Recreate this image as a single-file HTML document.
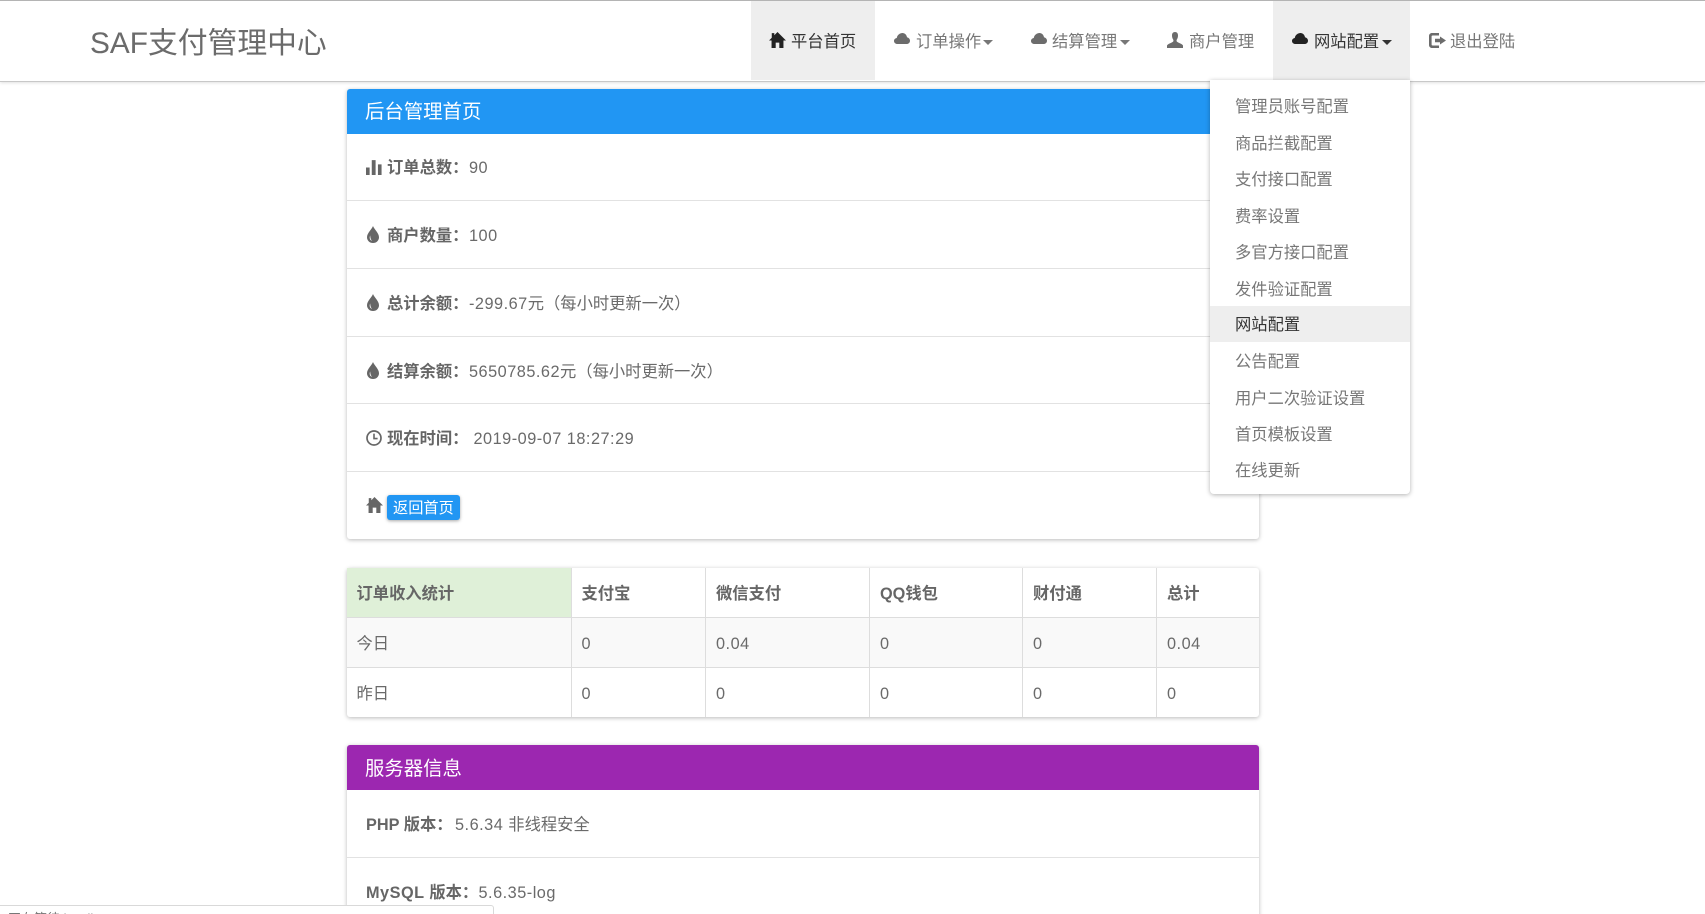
<!DOCTYPE html>
<html lang="zh-CN">
<head>
<meta charset="utf-8">
<title>SAF支付管理中心</title>
<style>
html,body{margin:0;padding:0;width:1705px;height:914px;overflow:hidden;background:#fff}
body{position:relative;font-family:"Liberation Sans","Noto Sans CJK SC",sans-serif;color:#6a6a6a}
.t{position:absolute;white-space:nowrap;line-height:20px;font-size:16.3px;margin-top:1px}
.b{font-weight:700;color:#666}
.box{position:absolute}
svg{position:absolute;display:block}
.nav{color:#777}
.on{color:#333}
.dd{color:#777}
.n{letter-spacing:.5px}
.caret{position:absolute;width:0;height:0;border-left:5px solid transparent;border-right:5px solid transparent;border-top:5.5px solid #777}
.line{position:absolute;left:347px;width:912px;height:1px;background:#e2e2e2}
.vl{position:absolute;top:568px;width:1px;height:149px;background:#ddd}
</style>
</head>
<body>
<!-- navbar -->
<div class="box" style="left:0;top:0;width:1705px;height:82px;background:#fff;border-top:1px solid #b4b4b4;border-bottom:1px solid #c8c8c8;box-sizing:border-box;box-shadow:0 1px 3px rgba(0,0,0,.12)"></div>
<div class="box" style="left:751px;top:1px;width:124px;height:79px;background:#eee"></div>
<div class="box" style="left:1273px;top:1px;width:137px;height:79px;background:#eee"></div>
<div class="t" style="left:90px;top:23px;font-size:29.8px;line-height:40px;color:#6b6b6b">SAF支付管理中心</div>

<svg style="left:769px;top:32px" width="17" height="16" viewBox="0 0 16 15"><path fill="#222" d="M8 0L16 8H13.6V15H9.7V10H6.3V15H2.4V8H0L2.6 5.4V1H5V3Z"/></svg>
<div class="t on" style="left:791px;top:31px">平台首页</div>

<svg style="left:894px;top:32px" width="16" height="12" viewBox="0 0 16 12"><path fill="#6c6c6c" d="M3.4 12C1.5 12 0 10.7 0 9C0 7.4 1.2 6.2 2.8 6C3 3.8 4.8 1.6 7.6 1.1C10.5.6 12.6 2.7 13 5.2C14.8 5.6 16 7 16 8.7C16 10.6 14.5 12 12.6 12Z"/></svg>
<div class="t nav" style="left:916px;top:31px">订单操作</div>
<div class="caret" style="left:983px;top:40px"></div>

<svg style="left:1031px;top:32px" width="16" height="12" viewBox="0 0 16 12"><path fill="#6c6c6c" d="M3.4 12C1.5 12 0 10.7 0 9C0 7.4 1.2 6.2 2.8 6C3 3.8 4.8 1.6 7.6 1.1C10.5.6 12.6 2.7 13 5.2C14.8 5.6 16 7 16 8.7C16 10.6 14.5 12 12.6 12Z"/></svg>
<div class="t nav" style="left:1052px;top:31px">结算管理</div>
<div class="caret" style="left:1120px;top:40px"></div>

<svg style="left:1167px;top:32px" width="16" height="16" viewBox="0 0 16 16"><path fill="#6c6c6c" d="M8 0C5.9 0 5 1.5 5 3.4C5 5 5.4 6.6 6.3 7.7C6.6 8.6 6.5 9.4 5.6 10C4.1 11 1 11.7 0 13.5V16H16V13.5C15 11.7 11.9 11 10.4 10C9.5 9.4 9.4 8.6 9.7 7.7C10.6 6.6 11 5 11 3.4C11 1.5 10.1 0 8 0Z"/></svg>
<div class="t nav" style="left:1189px;top:31px">商户管理</div>

<svg style="left:1292px;top:32px" width="16" height="12" viewBox="0 0 16 12"><path fill="#222" d="M3.4 12C1.5 12 0 10.7 0 9C0 7.4 1.2 6.2 2.8 6C3 3.8 4.8 1.6 7.6 1.1C10.5.6 12.6 2.7 13 5.2C14.8 5.6 16 7 16 8.7C16 10.6 14.5 12 12.6 12Z"/></svg>
<div class="t on" style="left:1314px;top:31px">网站配置</div>
<div class="caret" style="left:1382px;top:40px;border-top-color:#333"></div>

<svg style="left:1429px;top:33px" width="17" height="15" viewBox="0 0 17 15"><path fill="#6c6c6c" d="M3 0H10V2.5H3.6C3 2.5 2.6 2.9 2.6 3.5V11.5C2.6 12.1 3 12.5 3.6 12.5H10V15H3C1.3 15 0 13.7 0 12V3C0 1.3 1.3 0 3 0Z"/><path fill="#6c6c6c" d="M11 3.5L17 7.5L11 11.5V9.3H6V5.7H11Z"/></svg>
<div class="t nav" style="left:1450px;top:31px">退出登陆</div>

<!-- panel 1 -->
<div class="box" style="left:347px;top:89px;width:912px;height:450px;background:#fff;border-radius:3px;box-shadow:0 1px 4px rgba(0,0,0,.28)"></div>
<div class="box" style="left:347px;top:89px;width:912px;height:45px;background:#2196f3;border-radius:3px 3px 0 0"></div>
<div class="t" style="left:365px;top:101px;font-size:19.4px;color:#fff">后台管理首页</div>
<div class="line" style="top:200px"></div>
<div class="line" style="top:268px"></div>
<div class="line" style="top:336px"></div>
<div class="line" style="top:403px"></div>
<div class="line" style="top:471px"></div>

<svg style="left:366px;top:159px" width="16" height="16" viewBox="0 0 15 15"><path fill="#666" d="M0 8H3.4V15H0ZM5.4 1H9V15H5.4ZM11.2 5H14.6V15H11.2Z"/></svg>
<div class="t b" style="left:387px;top:157px">订单总数：</div>
<div class="t n" style="left:469px;top:157px">90</div>

<svg style="left:367px;top:226px" width="12" height="17" viewBox="0 0 12 17"><path fill="#666" fill-rule="evenodd" d="M6 0C6.9 3 12 7 12 11.2C12 14.5 9.4 17 6 17C2.6 17 0 14.5 0 11.2C0 7 5.1 3 6 0ZM3.2 9.5C2.2 11.5 2.6 14 5 15C3.8 13.5 3.2 11.5 3.2 9.5Z"/></svg>
<div class="t b" style="left:387px;top:225px">商户数量：</div>
<div class="t n" style="left:469px;top:225px">100</div>

<svg style="left:367px;top:294px" width="12" height="17" viewBox="0 0 12 17"><path fill="#666" fill-rule="evenodd" d="M6 0C6.9 3 12 7 12 11.2C12 14.5 9.4 17 6 17C2.6 17 0 14.5 0 11.2C0 7 5.1 3 6 0ZM3.2 9.5C2.2 11.5 2.6 14 5 15C3.8 13.5 3.2 11.5 3.2 9.5Z"/></svg>
<div class="t b" style="left:387px;top:293px">总计余额：</div>
<div class="t" style="left:469px;top:293px"><span class="n">-299.67</span>元（每小时更新一次）</div>

<svg style="left:367px;top:362px" width="12" height="17" viewBox="0 0 12 17"><path fill="#666" fill-rule="evenodd" d="M6 0C6.9 3 12 7 12 11.2C12 14.5 9.4 17 6 17C2.6 17 0 14.5 0 11.2C0 7 5.1 3 6 0ZM3.2 9.5C2.2 11.5 2.6 14 5 15C3.8 13.5 3.2 11.5 3.2 9.5Z"/></svg>
<div class="t b" style="left:387px;top:361px">结算余额：</div>
<div class="t" style="left:469px;top:361px"><span class="n">5650785.62</span>元（每小时更新一次）</div>

<svg style="left:366px;top:430px" width="16" height="16" viewBox="0 0 16 16"><circle cx="8" cy="8" r="7" fill="none" stroke="#666" stroke-width="1.7"/><path fill="none" stroke="#666" stroke-width="1.6" d="M8 3.6V8.6H11.6"/></svg>
<div class="t b" style="left:387px;top:428px">现在时间：</div>
<div class="t n" style="left:473.5px;top:428px">2019-09-07 18:27:29</div>

<svg style="left:366px;top:497px" width="17" height="16" viewBox="0 0 16 15"><path fill="#666" d="M8 0L16 8H13.6V15H9.7V10H6.3V15H2.4V8H0L2.6 5.4V1H5V3Z"/></svg>
<div class="box" style="left:387px;top:495px;width:73px;height:25px;background:#2196f3;border-radius:3px;box-shadow:0 1px 3px rgba(0,0,0,.35)"></div>
<div class="t" style="left:393px;top:498px;font-size:15.2px;color:#fff">返回首页</div>

<!-- table -->
<div class="box" style="left:347px;top:568px;width:912px;height:149px;background:#fff;border-radius:3px;box-shadow:0 1px 4px rgba(0,0,0,.28)"></div>
<div class="box" style="left:347px;top:568px;width:224px;height:50px;background:#dff0d8"></div>
<div class="box" style="left:347px;top:618px;width:912px;height:49px;background:#f9f9f9"></div>
<div class="line" style="top:617px;background:#ddd"></div>
<div class="line" style="top:667px;background:#ddd"></div>
<div class="vl" style="left:571px"></div>
<div class="vl" style="left:705px"></div>
<div class="vl" style="left:869px"></div>
<div class="vl" style="left:1022px"></div>
<div class="vl" style="left:1156px"></div>

<div class="t b" style="left:356.5px;top:583px">订单收入统计</div>
<div class="t b" style="left:581.5px;top:583px">支付宝</div>
<div class="t b" style="left:716px;top:583px">微信支付</div>
<div class="t b" style="left:880px;top:583px">QQ钱包</div>
<div class="t b" style="left:1033px;top:583px">财付通</div>
<div class="t b" style="left:1167px;top:583px">总计</div>

<div class="t" style="left:356.5px;top:633px">今日</div>
<div class="t n" style="left:581.5px;top:633px">0</div>
<div class="t n" style="left:716px;top:633px">0.04</div>
<div class="t n" style="left:880px;top:633px">0</div>
<div class="t n" style="left:1033px;top:633px">0</div>
<div class="t n" style="left:1167px;top:633px">0.04</div>

<div class="t" style="left:356.5px;top:683px">昨日</div>
<div class="t n" style="left:581.5px;top:683px">0</div>
<div class="t n" style="left:716px;top:683px">0</div>
<div class="t n" style="left:880px;top:683px">0</div>
<div class="t n" style="left:1033px;top:683px">0</div>
<div class="t n" style="left:1167px;top:683px">0</div>

<!-- server panel -->
<div class="box" style="left:347px;top:745px;width:912px;height:180px;background:#fff;border-radius:3px;box-shadow:0 1px 4px rgba(0,0,0,.28)"></div>
<div class="box" style="left:347px;top:745px;width:912px;height:45px;background:#9c27b0;border-radius:3px 3px 0 0"></div>
<div class="t" style="left:365px;top:758px;font-size:19.4px;color:#fff">服务器信息</div>
<div class="t b" style="left:366px;top:814px">PHP 版本：</div>
<div class="t" style="left:455px;top:814px"><span class="n">5.6.34 </span>非线程安全</div>
<div class="line" style="top:857px"></div>
<div class="t b" style="left:366px;top:882px"><span style="letter-spacing:.5px">MySQL </span>版本：</div>
<div class="t n" style="left:478.5px;top:882px">5.6.35-log</div>

<!-- dropdown -->
<div class="box" style="left:1210px;top:80px;width:200px;height:414px;background:#fff;border-radius:0 0 4px 4px;box-shadow:0 1px 5px rgba(0,0,0,.3)"></div>
<div class="box" style="left:1210px;top:306px;width:200px;height:36px;background:#eee"></div>
<div class="t dd" style="left:1235px;top:96px">管理员账号配置</div>
<div class="t dd" style="left:1235px;top:133px">商品拦截配置</div>
<div class="t dd" style="left:1235px;top:169px">支付接口配置</div>
<div class="t dd" style="left:1235px;top:206px">费率设置</div>
<div class="t dd" style="left:1235px;top:242px">多官方接口配置</div>
<div class="t dd" style="left:1235px;top:279px">发件验证配置</div>
<div class="t on" style="left:1235px;top:314px">网站配置</div>
<div class="t dd" style="left:1235px;top:351px">公告配置</div>
<div class="t dd" style="left:1235px;top:388px">用户二次验证设置</div>
<div class="t dd" style="left:1235px;top:424px">首页模板设置</div>
<div class="t dd" style="left:1235px;top:460px">在线更新</div>

<!-- status bar -->
<div class="box" style="left:-2px;top:905px;width:496px;height:12px;background:#fff;border:1px solid #d9d9d9;border-radius:0 3px 0 0;box-sizing:border-box;overflow:hidden">
<div class="t" style="left:9px;top:2px;font-size:13px;color:#777">正在等待 localhost</div>
</div>
</body>
</html>
